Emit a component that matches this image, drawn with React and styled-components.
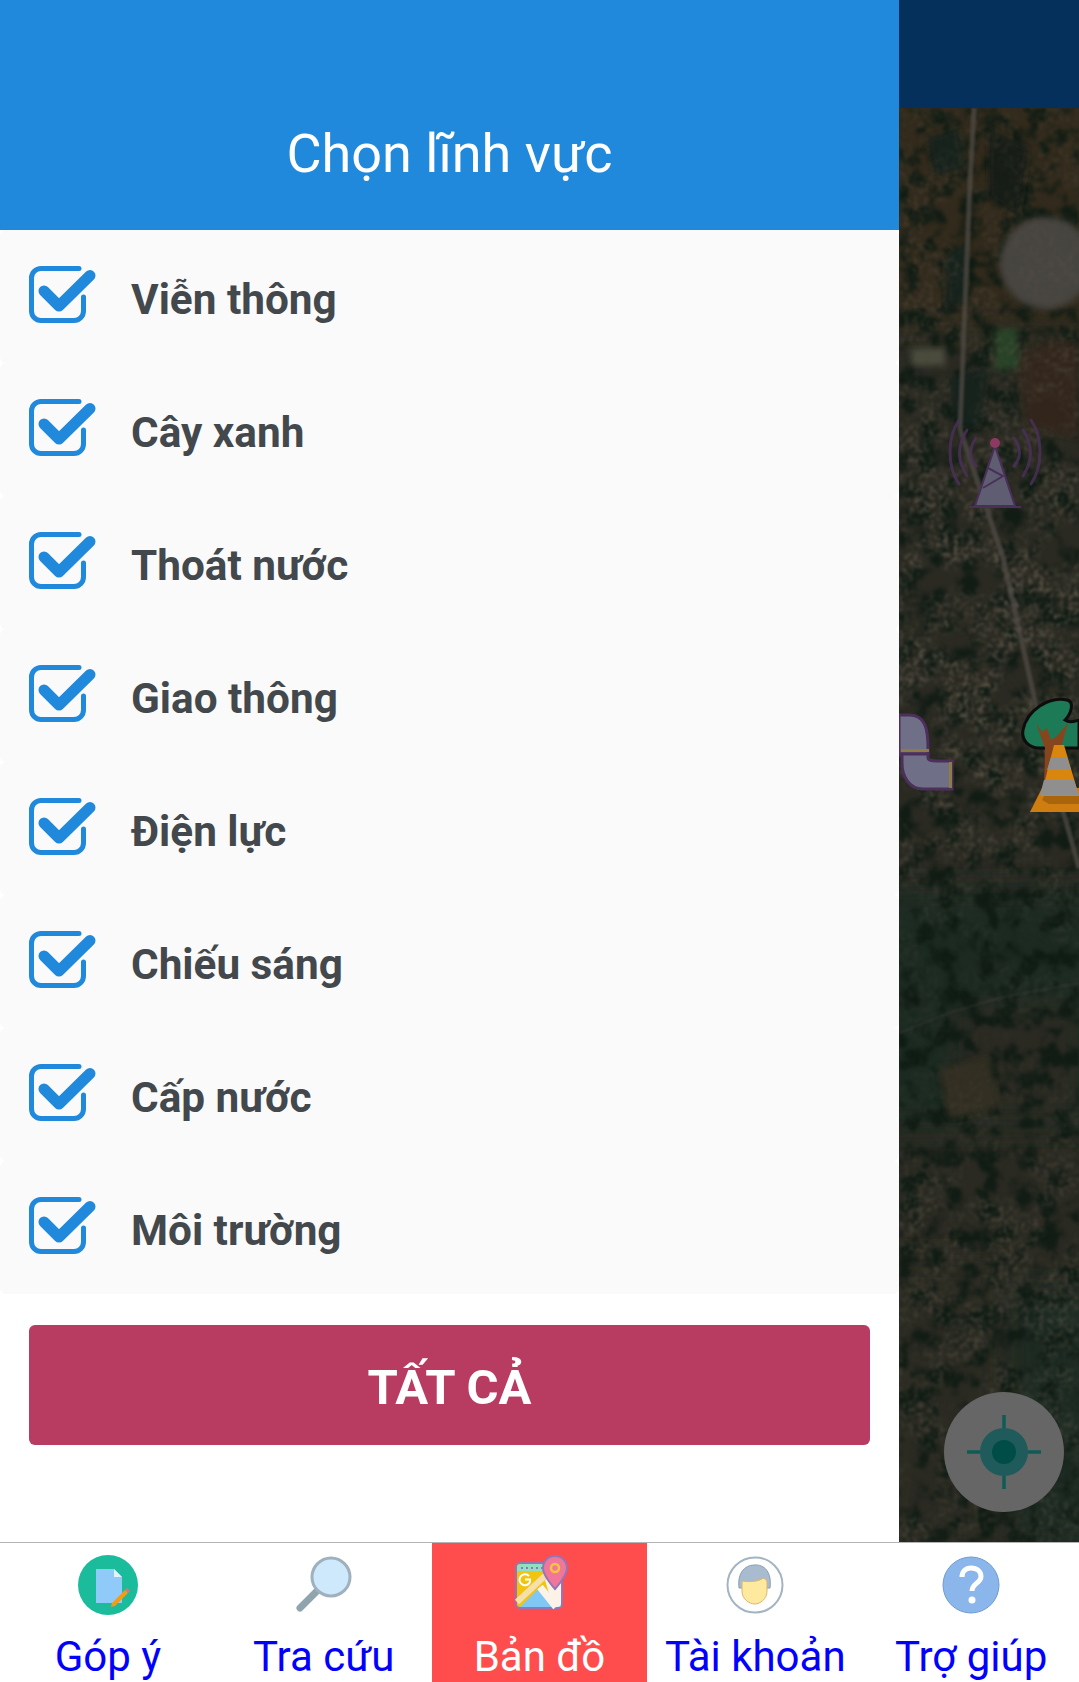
import React from "react"
import styled, { createGlobalStyle } from "styled-components"

const GlobalStyle = createGlobalStyle`
  html, body {
    margin: 0;
    padding: 0;
    background: #fff;
    font-family: Roboto, "Liberation Sans", sans-serif;
  }
`

const fields = [
  "Viễn thông",
  "Cây xanh",
  "Thoát nước",
  "Giao thông",
  "Điện lực",
  "Chiếu sáng",
  "Cấp nước",
  "Môi trường",
]

const CheckIcon = () => (
  <svg width="68" height="58" viewBox="0 0 68 58" fill="none">
    <path
      d="M50 2.5H12A9.5 9.5 0 0 0 2.500 12V45A9.500 9.500 0 0 0 12 54.500H45A9.500 9.500 0 0 0 54.500 45V31"
      stroke="#2089dc"
      strokeWidth="5"
      strokeLinecap="round"
    />
    <path
      d="M15 25L30 40L61 9.500"
      stroke="#2089dc"
      strokeWidth="11"
      strokeLinecap="round"
      strokeLinejoin="round"
    />
  </svg>
)

const FeedbackIcon = () => (
  <svg width="60" height="60" viewBox="0 0 60 60">
    <circle cx="30" cy="30" r="30" fill="#1abc9c" />
    <path d="M18 14H36L44 22V48H18Z" fill="#90caf9" />
    <path d="M36 14L44 22H36Z" fill="#e3f2fd" />
    <path d="M34 48L47 35L50 38L37 51L33 52Z" fill="#f59c12" />
    <path d="M47 35L49 33L52 36L50 38Z" fill="#e57373" />
  </svg>
)

const SearchIcon = () => (
  <svg width="60" height="60" viewBox="0 0 60 60">
    <line x1="6" y1="53" x2="23" y2="36" stroke="#90a4ae" strokeWidth="7" strokeLinecap="round" />
    <circle cx="37" cy="22" r="19" fill="#cfe9fc" stroke="#9fb1bf" strokeWidth="3" />
  </svg>
)

const MapIcon = () => (
  <svg width="60" height="60" viewBox="0 0 60 60">
    <rect x="7" y="8" width="46" height="45" rx="4" fill="#f1c40f" stroke="#9575b5" strokeWidth="2" />
    <path d="M8 13a4 4 0 0 1 4-4H38V16H8Z" fill="#8fe0c0" />
    <path d="M11 52L33 30L52 52Z" fill="#7fc8f5" />
    <path d="M36 25L47 18L52 24V48A4 4 0 0 1 48 52H44Z" fill="#fbf3e8" />
    <path d="M8 47L38 19" stroke="#f6dfa8" strokeWidth="6" />
    <path d="M31 32L47 52" stroke="#fbf3e8" strokeWidth="7" />
    <path d="M12 13H34" stroke="#9575b5" strokeWidth="2" strokeDasharray="2 3" />
    <path
      d="M24 21A5.500 5.500 0 1 0 25 27V24.500H20"
      fill="none"
      stroke="#fff"
      strokeWidth="2"
      transform="translate(-4 0)"
    />
    <path
      d="M46 1C39 1 34 6.500 34 13C34 21 46 34 46 34C46 34 58 21 58 13C58 6.500 53 1 46 1Z"
      fill="#f0779a"
      stroke="#9575b5"
      strokeWidth="2"
    />
    <circle cx="46" cy="13" r="4" fill="none" stroke="#f5c542" strokeWidth="2.500" />
  </svg>
)

const AccountIcon = () => (
  <svg width="60" height="60" viewBox="0 0 60 60">
    <circle cx="30" cy="30" r="27.500" fill="#fff" stroke="#a3b4c2" strokeWidth="2" />
    <path
      d="M14 33C12 18 20 10 29 10C40 9 47 18 45 33Z"
      fill="#a9bccf"
      stroke="#8a9fb3"
      strokeWidth="1"
    />
    <path
      d="M17 26C23 27 34 27 38 23C40 24 42 25 42 27V36C42 44 35 49 30 49C24 49 17 44 17 36Z"
      fill="#ffe99e"
      stroke="#d9b866"
      strokeWidth="1"
    />
  </svg>
)

const HelpIcon = () => (
  <svg width="60" height="60" viewBox="0 0 60 60">
    <circle cx="30" cy="30" r="28" fill="#8ab6ec" stroke="#6f9bd1" strokeWidth="1" />
    <path
      d="M21 22C21 16 25 13 30 13C36 13 40 16.500 40 21.500C40 28 31 28.500 31 36"
      fill="none"
      stroke="#fff"
      strokeWidth="5"
    />
    <circle cx="31" cy="45" r="3.500" fill="#fff" />
  </svg>
)

const tabs = [
  { label: "Góp ý", Icon: FeedbackIcon },
  { label: "Tra cứu", Icon: SearchIcon },
  { label: "Bản đồ", Icon: MapIcon, active: true },
  { label: "Tài khoản", Icon: AccountIcon },
  { label: "Trợ giúp", Icon: HelpIcon },
]

// satellite picture, local coords of the map pane (180 x 1434)
const MapDrawing = () => (
  <MapSvg viewBox="0 0 180 1434" preserveAspectRatio="none">
    <defs>
      <filter id="speckle" x="0" y="0" width="100%" height="100%" colorInterpolationFilters="sRGB">
        <feTurbulence type="fractalNoise" baseFrequency="0.2" numOctaves="3" seed="4" />
        <feColorMatrix
          type="matrix"
          values="0 0 0 0 0.37  0 0 0 0 0.34  0 0 0 0 0.29  3 0 0 0 -1.250"
          result="grain"
        />
        <feTurbulence type="fractalNoise" baseFrequency="0.022" numOctaves="2" seed="7" />
        <feColorMatrix
          type="matrix"
          values="0 0 0 0 0  0 0 0 0 0  0 0 0 0 0  4 0 0 0 -1.400"
          result="clusters"
        />
        <feComposite in="grain" in2="clusters" operator="in" />
        <feGaussianBlur stdDeviation="0.8" />
      </filter>
      <filter id="shade" x="0" y="0" width="100%" height="100%" colorInterpolationFilters="sRGB">
        <feTurbulence type="fractalNoise" baseFrequency="0.05" numOctaves="3" seed="21" />
        <feColorMatrix
          type="matrix"
          values="0 0 0 0 0.05  0 0 0 0 0.10  0 0 0 0 0.07  0 5 0 0 -2.300"
        />
        <feGaussianBlur stdDeviation="1.500" />
      </filter>
      <filter id="soft">
        <feGaussianBlur stdDeviation="3" />
      </filter>
      <filter id="softer">
        <feGaussianBlur stdDeviation="14" />
      </filter>
      <filter id="roadBlur">
        <feGaussianBlur stdDeviation="1.200" />
      </filter>
      <linearGradient id="speckleFade" x1="0" y1="0" x2="0" y2="1">
        <stop offset="0" stopColor="#fff" stopOpacity="0.2" />
        <stop offset="0.2" stopColor="#fff" stopOpacity="0.4" />
        <stop offset="0.3" stopColor="#fff" stopOpacity="0.8" />
        <stop offset="0.46" stopColor="#fff" stopOpacity="0.85" />
        <stop offset="0.56" stopColor="#fff" stopOpacity="0.2" />
        <stop offset="0.68" stopColor="#fff" stopOpacity="0.12" />
        <stop offset="0.78" stopColor="#fff" stopOpacity="0.5" />
        <stop offset="1" stopColor="#fff" stopOpacity="0.4" />
      </linearGradient>
      <mask id="speckleMask">
        <rect width="180" height="1434" fill="url(#speckleFade)" />
      </mask>
    </defs>
    <rect width="180" height="1434" fill="#2a2a22" />
    <g filter="url(#softer)">
      <rect x="-20" y="-20" width="220" height="240" fill="#33291f" />
      <rect x="-20" y="780" width="220" height="240" fill="#1c2a21" />
      <rect x="60" y="900" width="120" height="110" fill="#2c2a21" />
      <rect x="-20" y="1150" width="120" height="300" fill="#2b2920" />
      <rect x="110" y="1180" width="90" height="260" fill="#1b2a20" />
    </g>
    <rect width="180" height="1434" filter="url(#shade)" opacity="0.85" />
    <g filter="url(#soft)">
      <circle cx="147" cy="155" r="46" fill="#46453f" />
      <path d="M118 250L150 232L180 236V330L128 320Z" fill="#33261e" />
      <path d="M96 222L118 220L120 260L96 262Z" fill="#264226" />
      <path d="M28 30L60 20L66 60L36 68Z" fill="#14241a" />
      <path d="M90 20L130 40L120 110L90 90Z" fill="#121d17" />
      <path d="M46 150L70 130L68 190L48 200Z" fill="#14201a" />
      <path d="M50 270L90 260L80 320L56 316Z" fill="#14201a" />
      <rect x="12" y="240" width="34" height="18" fill="#4c4b3c" />
      <path d="M40 960L90 950L100 1000L50 1010Z" fill="#332e24" />
    </g>
    <rect width="180" height="1434" filter="url(#speckle)" mask="url(#speckleMask)" />
    <g fill="none" stroke="#4f4c45" strokeWidth="5" opacity="0.75" filter="url(#roadBlur)">
      <path d="M75 0L71 74L61 321L104 450L147 642L180 760" />
      <path d="M0 925L50 905L100 890L180 875" strokeWidth="2" opacity="0.4" />
    </g>
    {/* pipe marker */}
    <g>
      <path
        d="M0 607H10C26 607 29 620 29 640V646H0Z"
        fill="#6f7088"
        stroke="#4d2f5c"
        strokeWidth="3"
      />
      <path
        d="M3 646H29V650C29 652 34 653 38 653H53V681H24C10 681 3 668 3 655Z"
        fill="#6f7088"
        stroke="#4d2f5c"
        strokeWidth="3"
      />
      <rect x="2" y="641" width="28" height="3" fill="#8d7d45" />
      <rect x="50" y="654" width="3" height="26" fill="#8d7d45" />
    </g>
    {/* tower marker */}
    <g fill="none" stroke="#4a3058" strokeWidth="3" strokeLinecap="round" opacity="0.85">
      <path d="M77 330C70 340 70 350 77 358" />
      <path d="M68 322C58 338 58 352 68 368" />
      <path d="M60 312C48 330 48 358 60 376" />
      <path d="M115 330C122 340 122 350 115 358" />
      <path d="M124 322C134 338 134 352 124 368" />
      <path d="M132 312C144 330 144 358 132 376" />
    </g>
    <path d="M96 338L76 398H116Z" fill="#5f5d72" stroke="#4a3058" strokeWidth="2" />
    <path d="M70 399H122M89 360L104 368L84 380" fill="none" stroke="#4a3058" strokeWidth="2" />
    <circle cx="96" cy="335" r="5" fill="#8d3a62" />
    {/* tree and cone markers */}
    <path
      d="M124 622C128 602 150 588 168 592C176 594 172 606 166 612C172 616 178 612 180 612V640H140C130 640 122 632 124 622Z"
      fill="#1c7a57"
      stroke="#0d0d0d"
      strokeWidth="3"
    />
    <path
      d="M145 680L146 640L137 615L143 624L148 620L152 632L158 628L169 615L162 640L158 680Z"
      fill="#86451d"
    />
    <path d="M131 704L143 680H180V704Z" fill="#cf7c10" />
    <path d="M143 692L146 686H180V696H150Z" fill="#a9650c" />
    <path d="M155 637H165L180 688H142Z" fill="#d9860f" />
    <path d="M152 649H168L172 662H148Z" fill="#8f8f8f" />
    <path d="M145 672H175L180 687H141Z" fill="#8f8f8f" />
  </MapSvg>
)

const App = () => {
  return (
    <>
      <GlobalStyle />
      <Page>
        <Main>
          <Drawer>
            <DrawerHeader>
              <Title>Chọn lĩnh vực</Title>
            </DrawerHeader>
            <List>
              {fields.map((name) => (
                <Row key={name}>
                  <CheckIcon />
                  <RowLabel>{name}</RowLabel>
                </Row>
              ))}
            </List>
            <DrawerFooter>
              <SelectAll type="button">TẤT CẢ</SelectAll>
            </DrawerFooter>
          </Drawer>
          <MapPane>
            <MapHeader />
            <MapBody>
              <MapDrawing />
              <LocateButton type="button" aria-label="locate">
                <svg width="74" height="74" viewBox="0 0 74 74">
                  <path d="M37 0V74M0 37H74" stroke="#0f5c57" strokeWidth="3.500" />
                  <circle cx="37" cy="37" r="24" fill="#1f5b5a" />
                  <circle cx="37" cy="37" r="12" fill="#004d47" />
                </svg>
              </LocateButton>
            </MapBody>
          </MapPane>
        </Main>
        <TabBar>
          {tabs.map(({ label, Icon, active }) => (
            <Tab key={label} $active={active}>
              <TabIcon>
                <Icon />
              </TabIcon>
              <TabLabel $active={active}>{label}</TabLabel>
            </Tab>
          ))}
        </TabBar>
      </Page>
    </>
  )
}

const Page = styled.div`
  width: 1079px;
  height: 1682px;
  display: flex;
  flex-direction: column;
  overflow: hidden;
`

const Main = styled.div`
  flex: 1;
  min-height: 0;
  display: flex;
`

const Drawer = styled.aside`
  width: 899px;
  flex-shrink: 0;
  background: #fff;
  display: flex;
  flex-direction: column;
`

const DrawerHeader = styled.header`
  height: 230px;
  background: #2089dc;
  display: flex;
  align-items: flex-end;
  justify-content: center;
  padding-bottom: 44px;
  box-sizing: border-box;
`

const Title = styled.h1`
  margin: 0;
  color: #fff;
  font-size: 54px;
  font-weight: 400;
  line-height: 64px;
`

const List = styled.div`
  display: flex;
  flex-direction: column;
`

const Row = styled.label`
  height: 133px;
  box-sizing: border-box;
  background: #fafafa;
  border-radius: 6px;
  display: flex;
  align-items: center;
  padding-left: 29px;

  svg {
    flex-shrink: 0;
    margin-top: -4px;
  }
`

const RowLabel = styled.span`
  margin: 6px 0 0 34px;
  color: #43484d;
  font-size: 42.3px;
  font-weight: 700;
  line-height: 48px;
`

const DrawerFooter = styled.div`
  padding: 31px 29px;
`

const SelectAll = styled.button`
  width: 100%;
  height: 120px;
  padding: 4px 0 0;
  border: 0;
  border-radius: 6px;
  background: #b83b62;
  color: #fff;
  font-family: inherit;
  font-size: 49px;
  font-weight: 700;
`

const MapPane = styled.div`
  flex: 1;
  display: flex;
  flex-direction: column;
  background: #24261f;
`

const MapHeader = styled.div`
  height: 108px;
  background: #06305c;
`

const MapBody = styled.div`
  flex: 1;
  min-height: 0;
  position: relative;
  overflow: hidden;
`

const MapSvg = styled.svg`
  display: block;
  width: 100%;
  height: 100%;
`

const LocateButton = styled.button`
  position: absolute;
  right: 15px;
  bottom: 30px;
  width: 120px;
  height: 120px;
  padding: 0;
  border: 0;
  border-radius: 50%;
  background: #666;
  display: flex;
  align-items: center;
  justify-content: center;
`

const TabBar = styled.nav`
  height: 140px;
  flex-shrink: 0;
  box-sizing: border-box;
  border-top: 1px solid #b3b3b3;
  background: #fff;
  display: grid;
  grid-template-columns: repeat(5, 1fr);
`

const Tab = styled.div`
  background: ${(p) => (p.$active ? "#ff4c4c" : "transparent")};
  display: flex;
  flex-direction: column;
  align-items: center;
  padding-top: 12px;
  overflow: hidden;
`

const TabIcon = styled.div`
  width: 60px;
  height: 60px;
`

const TabLabel = styled.span`
  margin-top: 18px;
  color: ${(p) => (p.$active ? "#fff" : "#0000ff")};
  font-size: 42px;
  line-height: 48px;
  white-space: nowrap;
`

export default App
